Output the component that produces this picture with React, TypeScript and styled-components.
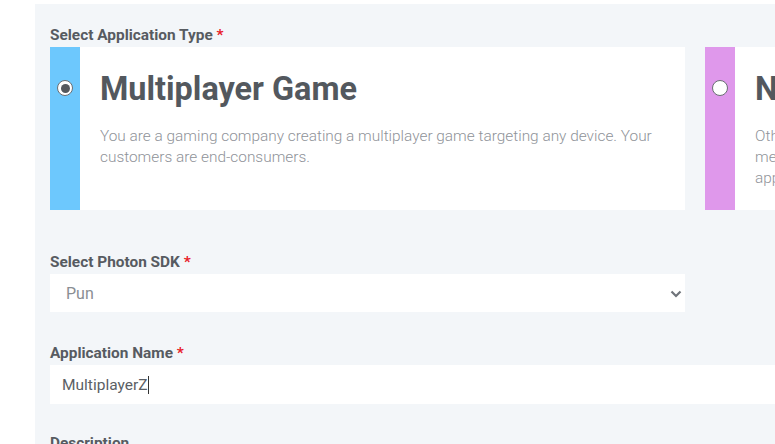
import React from "react";
import styled, { createGlobalStyle } from "styled-components";

const Global = createGlobalStyle`
  html, body {
    margin: 0;
    padding: 0;
    background: #ffffff;
    overflow: hidden;
    font-family: Roboto, "Liberation Sans", Arial, sans-serif;
  }
  * { box-sizing: border-box; }
`;

const Page = styled.div`
  padding: 4px 0 0 35px;
  width: 1400px;
`;

const Panel = styled.form`
  background: #f3f6f9;
  padding: 21px 15px 40px 15px;
  width: 1340px;
  min-height: 600px;
`;

const Group = styled.div<{ $gap: number }>`
  margin-bottom: ${(p) => p.$gap}px;
`;

const Label = styled.label`
  display: block;
  font-size: 15.4px;
  line-height: 20px;
  font-weight: 700;
  color: #575b61;
  margin-bottom: 2px;
`;

const Req = styled.span`
  color: #e8202a;
`;

const Cards = styled.div`
  display: flex;
  gap: 20px;
`;

const Card = styled.div`
  display: flex;
  width: 635px;
  flex-shrink: 0;
  background: #ffffff;
`;

const Bar = styled.div<{ $color: string }>`
  width: 30px;
  flex-shrink: 0;
  background: ${(p) => p.$color};
  display: flex;
  justify-content: center;
  padding-top: 33px;
`;

const Radio = styled.span<{ $checked: boolean }>`
  width: 16px;
  height: 16px;
  border-radius: 50%;
  background: #ffffff;
  border: 1px solid #6a6e73;
  display: flex;
  align-items: center;
  justify-content: center;
  &::after {
    content: "";
    width: 9px;
    height: 9px;
    border-radius: 50%;
    background: ${(p) => (p.$checked ? "#54585d" : "transparent")};
  }
`;

const Body = styled.div`
  padding: 23px 20px 21px 20px;
  flex: 1;
`;

const Title = styled.h2`
  margin: 0 0 18px 0;
  font-size: 32.4px;
  line-height: 38px;
  font-weight: 700;
  color: #53585e;
  white-space: nowrap;
`;

const Desc = styled.p`
  margin: 0;
  font-size: 15.4px;
  line-height: 21px;
  font-weight: 300;
  color: #8f9399;
  white-space: nowrap;
`;

const SelectWrap = styled.div`
  position: relative;
  width: 635px;
`;

const Select = styled.select`
  appearance: none;
  width: 100%;
  height: 38px;
  border: none;
  background: #ffffff;
  padding: 0 16px;
  font-family: inherit;
  font-size: 16px;
  color: #8a8e93;
  outline: none;
`;

const Chevron = styled.svg`
  position: absolute;
  right: 3px;
  top: 16px;
  pointer-events: none;
`;

const Field = styled.div`
  display: flex;
  align-items: center;
  height: 39px;
  width: 100%;
  background: #ffffff;
  padding: 0 12px;
  font-size: 15.5px;
  color: #5b5f65;
`;

const Caret = styled.span`
  display: inline-block;
  width: 1px;
  height: 18px;
  background: #333;
  margin-left: 1px;
`;

export default function App() {
  return (
    <>
      <Global />
      <Page>
        <Panel>
          <Group $gap={42}>
            <Label>
              Select Application Type <Req>*</Req>
            </Label>
            <Cards>
              <Card>
                <Bar $color="#6dc8fd">
                  <Radio $checked={true} />
                </Bar>
                <Body>
                  <Title>Multiplayer Game</Title>
                  <Desc>
                    You are a gaming company creating a multiplayer game targeting any device. Your
                    <br />
                    customers are end-consumers.
                  </Desc>
                </Body>
              </Card>
              <Card>
                <Bar $color="#df98eb">
                  <Radio $checked={false} />
                </Bar>
                <Body>
                  <Title>Non-Gaming Application</Title>
                  <Desc>
                    Other industries (e.g. education, enterprise, healthcare, automotive, retail or
                    <br />
                    media) creating real-time multi-user experiences with non-gaming
                    <br />
                    applications. Your customers are businesses or end-consumers.
                  </Desc>
                </Body>
              </Card>
            </Cards>
          </Group>
          <Group $gap={31}>
            <Label>
              Select Photon SDK <Req>*</Req>
            </Label>
            <SelectWrap>
              <Select defaultValue="pun">
                <option value="pun">Pun</option>
                <option value="realtime">Realtime</option>
                <option value="fusion">Fusion</option>
              </Select>
              <Chevron width="12" height="8" viewBox="0 0 12 8">
                <path d="M1.5 1.5 L6 6 L10.5 1.5" fill="none" stroke="#6f747a" strokeWidth="2.2" />
              </Chevron>
            </SelectWrap>
          </Group>
          <Group $gap={29}>
            <Label>
              Application Name <Req>*</Req>
            </Label>
            <Field role="textbox">
              MultiplayerZ
              <Caret />
            </Field>
          </Group>
          <Group $gap={0}>
            <Label>Description</Label>
          </Group>
        </Panel>
      </Page>
    </>
  );
}
